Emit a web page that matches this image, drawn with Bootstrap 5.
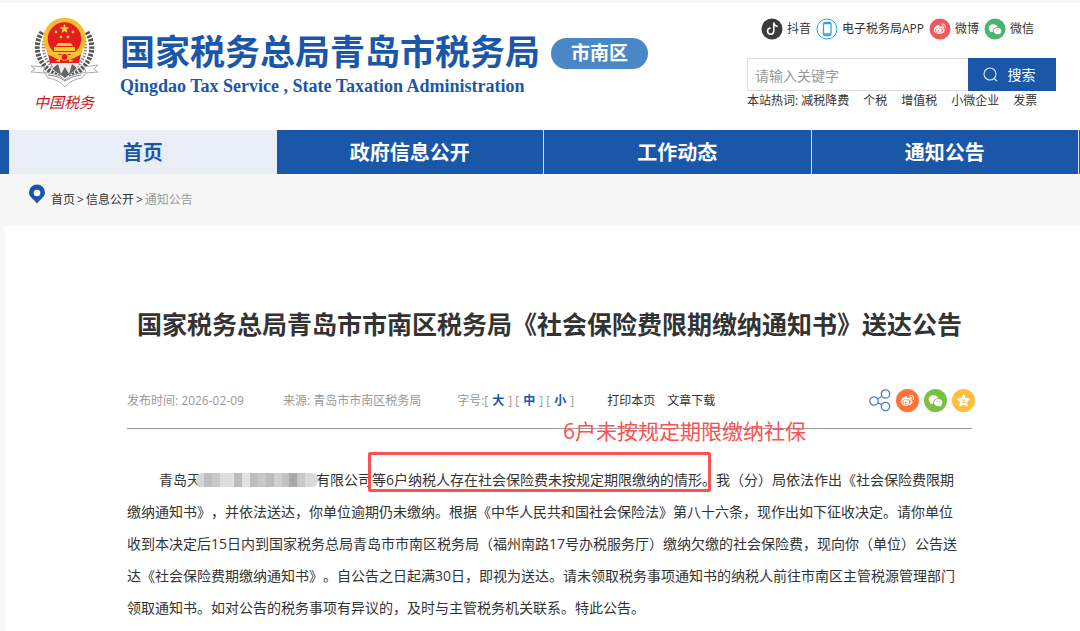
<!DOCTYPE html>
<html lang="zh-CN">
<head>
<meta charset="utf-8">
<meta name="viewport" content="width=device-width, initial-scale=1">
<title>国家税务总局青岛市税务局 市南区</title>
<link href="https://cdn.jsdelivr.net/npm/bootstrap@5.3.0/dist/css/bootstrap.min.css" rel="stylesheet">
<style>
  :root { --tax-blue: #1a57a9; --tax-red: #fa5252; }
  body { font-family: "Open Sans", "Noto Sans CJK SC", sans-serif; font-size: 12px; line-height: 20px; color: #333; background: #f7f7f7; text-spacing-trim: space-all; }
  a { color: inherit; text-decoration: none; }
  svg { display: block; flex: none; }
  .site-head { margin-top: 3px; height: 127px; padding: 0 24px 0 30px; }
  .emblem { width: 70px; padding-top: 14px; }
  .emblem-name { color: #c8161d; font: italic 15px/20px "Noto Sans CJK SC", sans-serif; padding-left: 4px; }
  .brand-block { margin-left: 20px; padding-top: 26px; color: var(--tax-blue); }
  .brand-cn { font-size: 35px; font-weight: 700; line-height: 46px; margin: 0; }
  .brand-en { font: bold 18px/22px "Liberation Serif", serif; margin: 0; }
  .district { margin: 35px 0 0 11px; width: 97px; height: 31px; line-height: 31px; font-size: 19px; font-weight: 700; color: #fff; background: #4a87c7; }
  .tools { width: 309px; }
  .apps { padding: 15px 0 0 14px; gap: 5px; }
  .apps a { gap: 4px; }
  .search-box { margin-top: 18px; height: 33px; }
  .search-box input { border: 1px solid #ddd; border-right: 0; padding: 3px 7px 0; font-size: 14px; color: #333; min-width: 0; }
  .search-box input::placeholder { color: #999; }
  .search-box button { width: 88px; border: 0; background: var(--tax-blue); color: #fff; font-size: 14px; gap: 10px; padding: 0 12px 0 6px; }
  .hot-words { gap: 14px; }
  .main-nav { background: var(--tax-blue); padding: 0 1px 0 9px; height: 44px; }
  .main-nav a { color: #fff; font-size: 20px; font-weight: 700; line-height: 46px; height: 44px; text-align: center; border-right: 1px solid #d5e0ef; }
  .main-nav a.current { background: #e8edf6; color: var(--tax-blue); }
  .crumbs { height: 52px; padding: 10px 28px 0; gap: 5px; }
  .crumbs p { margin: 6px 0 0; gap: 2px; }
  .crumbs .here { color: #999; }
  .article { margin-left: 5px; padding: 79px 108px 8px 122px; }
  .article h1 { font-size: 25px; line-height: 38px; font-weight: 700; margin: 0 -20px; white-space: nowrap; }
  .meta-row { margin-top: 40px; height: 46px; padding-top: 8px; border-bottom: 1px solid #999; color: #999; }
  .meta-row .source { margin-left: 39px; }
  .meta-row .sizes { margin-left: 36px; gap: 4px; }
  .meta-row .sizes a { color: var(--tax-blue); font-weight: 700; }
  .meta-row .acts { margin-left: 33px; gap: 12px; color: #333; }
  .share { gap: 5px; margin: -2px -3px 0 0; }
  .note { left: 436px; top: 33px; font-size: 21px; line-height: 30px; color: var(--tax-red); white-space: nowrap; }
  .article-text { margin: 35px -10px 0 0; font-size: 14px; line-height: 32px; text-indent: 32px; }
  .masked { display: inline-block; width: 122px; height: 14px; border-radius: 6px; vertical-align: -2px; margin: 0 -2px 0 -5px; position: relative;
    background: linear-gradient(90deg, #d6d6d6 0 8px, #bdc0c2 8px 16px, #c9c9c9 16px 24px, #dedede 24px 38px, #bcbcbc 38px 46px, #e2e2e2 46px 54px, #bdbdbd 54px 62px, #c9c6c6 62px 70px, #b9bcbe 70px 78px, #d0d0d0 78px 86px, #c2c2c2 86px 93px, #aaa7a7 93px 101px, #c8c8c8 101px 109px, #dadada 109px); }
  .boxed { position: relative; }
  .boxed::after { content: ""; position: absolute; inset: -18px 5px -3px -4px; border: 3px solid var(--tax-red); border-radius: 2px; }
</style>
</head>
<body>
<svg width="0" height="0" class="position-absolute" aria-hidden="true">
  <symbol id="wechat" viewBox="0 0 16 16"><path d="M11.176 14.429c-2.665 0-4.826-1.8-4.826-4.018 0-2.22 2.159-4.02 4.824-4.02S16 8.191 16 10.411c0 1.21-.65 2.301-1.666 3.036a.32.32 0 0 0-.12.366l.218.81a.6.6 0 0 1 .029.117.166.166 0 0 1-.162.162.2.2 0 0 1-.092-.03l-1.057-.61a.5.5 0 0 0-.256-.074.5.5 0 0 0-.142.021 5.7 5.7 0 0 1-1.576.22M9.064 9.542a.647.647 0 1 0 .557-1 .645.645 0 0 0-.646.647.6.6 0 0 0 .09.353Zm3.232.001a.646.646 0 1 0 .546-1 .645.645 0 0 0-.644.644.63.63 0 0 0 .098.356M0 6.826c0 1.455.781 2.765 2.001 3.656a.385.385 0 0 1 .143.439l-.261.973a.5.5 0 0 0-.032.14.19.19 0 0 0 .193.193q.06 0 .111-.029l1.268-.733a.6.6 0 0 1 .308-.088q.088 0 .171.025a6.8 6.8 0 0 0 1.625.26 4.5 4.5 0 0 1-.177-1.251c0-2.936 2.785-5.02 5.824-5.02l.15.002C10.587 3.429 8.392 2 5.796 2 2.596 2 0 4.16 0 6.826" fill="#fff"/></symbol>
  <symbol id="weibo" viewBox="0 0 16 16"><path fill="#fff" fill-rule="evenodd" d="M6.2 3.2C3.600 3.500.3 6.800.3 9.600c0 2.600 3.200 4.400 6.500 4.400 4.200 0 7-2.300 7-4.500 0-1.500-1.200-2.200-2.300-2.500.7-1.900-.9-2.900-3.900-1.600.5-1.500-.1-2.200-1.400-2.200ZM6.700 6.500c2.700-.2 4.900 1.100 5 2.900.1 1.800-2 3.300-4.700 3.500-2.700.1-4.900-1.200-5-2.900-.1-1.800 2-3.300 4.700-3.500Z"/><ellipse cx="6.600" cy="9.800" rx="3.400" ry="2.900" fill="#fff"/><circle cx="5.800" cy="10.300" r="1" fill="currentColor"/><path d="M10.300 2c3-.6 5.400 1.900 4.500 4.700M10.800 4.200c1.400-.2 2.300.8 2 2.100" fill="none" stroke="#fff" stroke-width="1.200" stroke-linecap="round"/></symbol>
</svg>

<header class="site-head bg-white d-flex align-items-start">
  <div class="emblem">
    <svg width="70" height="75" viewBox="0 0 70 75" role="img" aria-label="中国税务徽标">
      <g fill="none" stroke="#555" stroke-width="5" stroke-dasharray="2.500 1.300"><path d="M12 15C3 29 6 48 29 60"/><path d="M57 15C66 29 63 48 40 60"/></g>
      <g fill="none" stroke="#888" stroke-width="3" stroke-dasharray="1.500 1.500"><path d="M15 21C10 36 17 48 31 57"/><path d="M54 21C59 36 52 48 38 57"/></g>
      <path d="M19 44h31l-5 9-10 8-11-8Z" fill="#666"/>
      <path d="M20 44l3 7 5-4 3 10 4-7 4 7 3-10 5 4 3-7Z" fill="#ececec"/>
      <path d="M17 33h35l-3 13H20Z" fill="#e51d20"/>
      <circle cx="34.500" cy="22" r="19" fill="#e51d20" stroke="#f3bd2d" stroke-width="4.500"/>
      <path d="M18 36q16 9 33 0" stroke="#f6bd35" stroke-width="3" fill="none"/>
      <path d="m34.500 7 1.300 3.200 3.500.2-2.700 2.200.9 3.400-3-1.900-3 1.900.9-3.400-2.700-2.200 3.500-.2Z" fill="#ffd23c"/>
      <g fill="#ffc936"><circle cx="26" cy="15" r="1.400"/><circle cx="43" cy="15" r="1.400"/><circle cx="31" cy="20" r="1.400"/><circle cx="38" cy="20" r="1.400"/><path d="M28 26h13l2 3H26ZM24 30h21v4H24ZM20 35h29v2H20ZM25 44l5-2v3ZM44 44l-5-2v3Z"/></g>
      <circle cx="34.500" cy="40" r="3.500" fill="#e51d20" stroke="#ffc936"/>
      <path d="M1 49l14 1-2 5 10 2q7 1 12 6 5-5 12-6l9-2-2-5 14-2-4 4 4 3-12 1-4 5q-10 1-17 9-7-8-17-9l-3-5-14-1 4-3Z" fill="#fcfcfc" stroke="#aaa"/>
      <path d="M18 58q11 1 17 6 6-5 16-6" fill="none" stroke="#888" stroke-width="1"/>
    </svg>
    <div class="emblem-name">中国税务</div>
  </div>
  <div class="brand-block text-nowrap">
    <p class="brand-cn">国家税务总局青岛市税务局</p>
    <p class="brand-en">Qingdao Tax Service , State Taxation Administration</p>
  </div>
  <div class="district rounded-pill text-center flex-shrink-0">市南区</div>
  <div class="tools ms-auto flex-shrink-0">
    <div class="apps d-flex text-nowrap">
      <a href="#" class="d-flex align-items-center"><svg width="22" height="22" viewBox="0 0 22 22"><circle cx="11" cy="11" r="10.500" fill="#3b3b3b"/><path transform="translate(5 4.500) scale(.78)" d="M9 0h1.980c.144.715.54 1.617 1.235 2.512C12.895 3.389 13.797 4 15 4v2c-1.753 0-3.070-.814-4-1.829V11a5 5 0 1 1-5-5v2a3 3 0 1 0 3 3z" fill="#fff"/></svg>抖音</a>
      <a href="#" class="d-flex align-items-center"><svg width="22" height="22" viewBox="0 0 22 22"><circle cx="11" cy="11" r="10" fill="#fff" stroke="#2ea3e0"/><rect x="7.500" y="4.500" width="7.500" height="13" rx="1.500" fill="#fff" stroke="#2ea3e0" stroke-width="1.300"/><path d="M7.500 5.500H15M7.500 16H15" stroke="#2ea3e0" stroke-width="1.500"/></svg>电子税务局APP</a>
      <a href="#" class="d-flex align-items-center"><svg width="22" height="22" viewBox="0 0 22 22" color="#ec5a5b"><circle cx="11" cy="11" r="10.500" fill="currentColor"/><use href="#weibo" x="4.500" y="4.500" width="13" height="13"/></svg>微博</a>
      <a href="#" class="d-flex align-items-center"><svg width="22" height="22" viewBox="0 0 22 22"><circle cx="11" cy="11" r="10.500" fill="#4db46d"/><use href="#wechat" x="4.500" y="4.500" width="13" height="13"/></svg>微信</a>
    </div>
    <form class="search-box d-flex">
      <input type="search" class="flex-grow-1 rounded-0" placeholder="请输入关键字" aria-label="请输入关键字">
      <button type="button" class="d-flex align-items-center justify-content-center"><svg width="15" height="16" viewBox="0 0 15 16" fill="none" stroke="#dce7f5" stroke-width="1.100"><circle cx="7" cy="7" r="6"/><path d="m11 11.500 3 2.500"/></svg><span>搜索</span></button>
    </form>
    <div class="hot-words d-flex text-nowrap"><span>本站热词: <a href="#">减税降费</a></span><a href="#">个税</a><a href="#">增值税</a><a href="#">小微企业</a><a href="#">发票</a></div>
  </div>
</header>

<nav class="main-nav row-cols-4 d-flex">
  <a href="#" class="current border-0">首页</a>
  <a href="#">政府信息公开</a>
  <a href="#">工作动态</a>
  <a href="#">通知公告</a>
</nav>

<div class="crumbs d-flex align-items-start">
  <svg width="18" height="20" viewBox="0 0 18 20"><path d="M9 .500a8 8 0 0 1 8 8c0 4-4 6-8 11-4-5-8-7-8-11a8 8 0 0 1 8-8Z" fill="#1a57a9"/><circle cx="9" cy="9" r="3.300" fill="#fff"/></svg>
  <p class="d-flex"><a href="#">首页</a><span>&gt;</span><a href="#">信息公开</a><span>&gt;</span><span class="here">通知公告</span></p>
</div>

<main class="article bg-white">
  <h1 class="text-center">国家税务总局青岛市市南区税务局《社会保险费限期缴纳通知书》送达公告</h1>
  <div class="meta-row position-relative d-flex align-items-start text-nowrap">
    <span>发布时间: 2026-02-09</span>
    <span class="source">来源: 青岛市市南区税务局</span>
    <span class="sizes d-flex"><span>字号:[</span><a href="#">大</a><span>] [</span><a href="#">中</a><span>] [</span><a href="#">小</a><span>]</span></span>
    <span class="acts d-flex"><a href="#">打印本页</a><a href="#">文章下载</a></span>
    <span class="share d-flex ms-auto">
      <a href="#" aria-label="分享"><svg width="22" height="23" viewBox="0 0 22 23" fill="none" stroke="#4c7fc0" stroke-width="1.300"><circle cx="5" cy="12" r="4.200"/><circle cx="16.500" cy="5" r="4.200"/><circle cx="16.500" cy="17.500" r="4.200"/><path d="m8.700 9.700 4.200-2.500M8.700 13.700l4.200 2"/></svg></a>
      <a href="#" aria-label="微博"><svg width="23" height="23" viewBox="0 0 23 23" color="#fb7339"><circle cx="11.500" cy="11.500" r="11.500" fill="currentColor"/><use href="#weibo" x="4.500" y="4.500" width="14" height="14"/></svg></a>
      <a href="#" aria-label="微信"><svg width="23" height="23" viewBox="0 0 23 23"><circle cx="11.500" cy="11.500" r="11.500" fill="#7ac143"/><use href="#wechat" x="4.500" y="4.500" width="14" height="14"/></svg></a>
      <a href="#" aria-label="收藏"><svg width="23" height="23" viewBox="0 0 23 23"><circle cx="11.500" cy="11.500" r="11.500" fill="#fdbe3c"/><path d="m11.500 5.500 1.900 3.900 4.300.6-3.100 3 .7 4.300-3.800-2-3.800 2 .7-4.300-3.100-3 4.300-.6Z" fill="#fff" stroke="#fff" stroke-linejoin="round"/><path d="M10 11h3l-2.500 2.500h3" stroke="#fdbe3c" stroke-width=".8" fill="none"/></svg></a>
    </span>
    <span class="note position-absolute">6户未按规定期限缴纳社保</span>
  </div>
  <p class="article-text text-nowrap">青岛天<span class="masked"></span>有限公司<span class="boxed">等6户纳税人存在社会保险费未按规定期限缴纳的情形。</span>我（分）局依法作出《社会保险费限期<br>
缴纳通知书》，并依法送达，你单位逾期仍未缴纳。根据《中华人民共和国社会保险法》第八十六条，现作出如下征收决定。请你单位<br>
收到本决定后15日内到国家税务总局青岛市市南区税务局（福州南路17号办税服务厅）缴纳欠缴的社会保险费，现向你（单位）公告送<br>
达《社会保险费期缴纳通知书》。自公告之日起满30日，即视为送达。请未领取税务事项通知书的纳税人前往市南区主管税源管理部门<br>
领取通知书。如对公告的税务事项有异议的，及时与主管税务机关联系。特此公告。</p>
</main>
<script src="https://cdn.jsdelivr.net/npm/bootstrap@5.3.0/dist/js/bootstrap.bundle.min.js"></script>
</body>
</html>
